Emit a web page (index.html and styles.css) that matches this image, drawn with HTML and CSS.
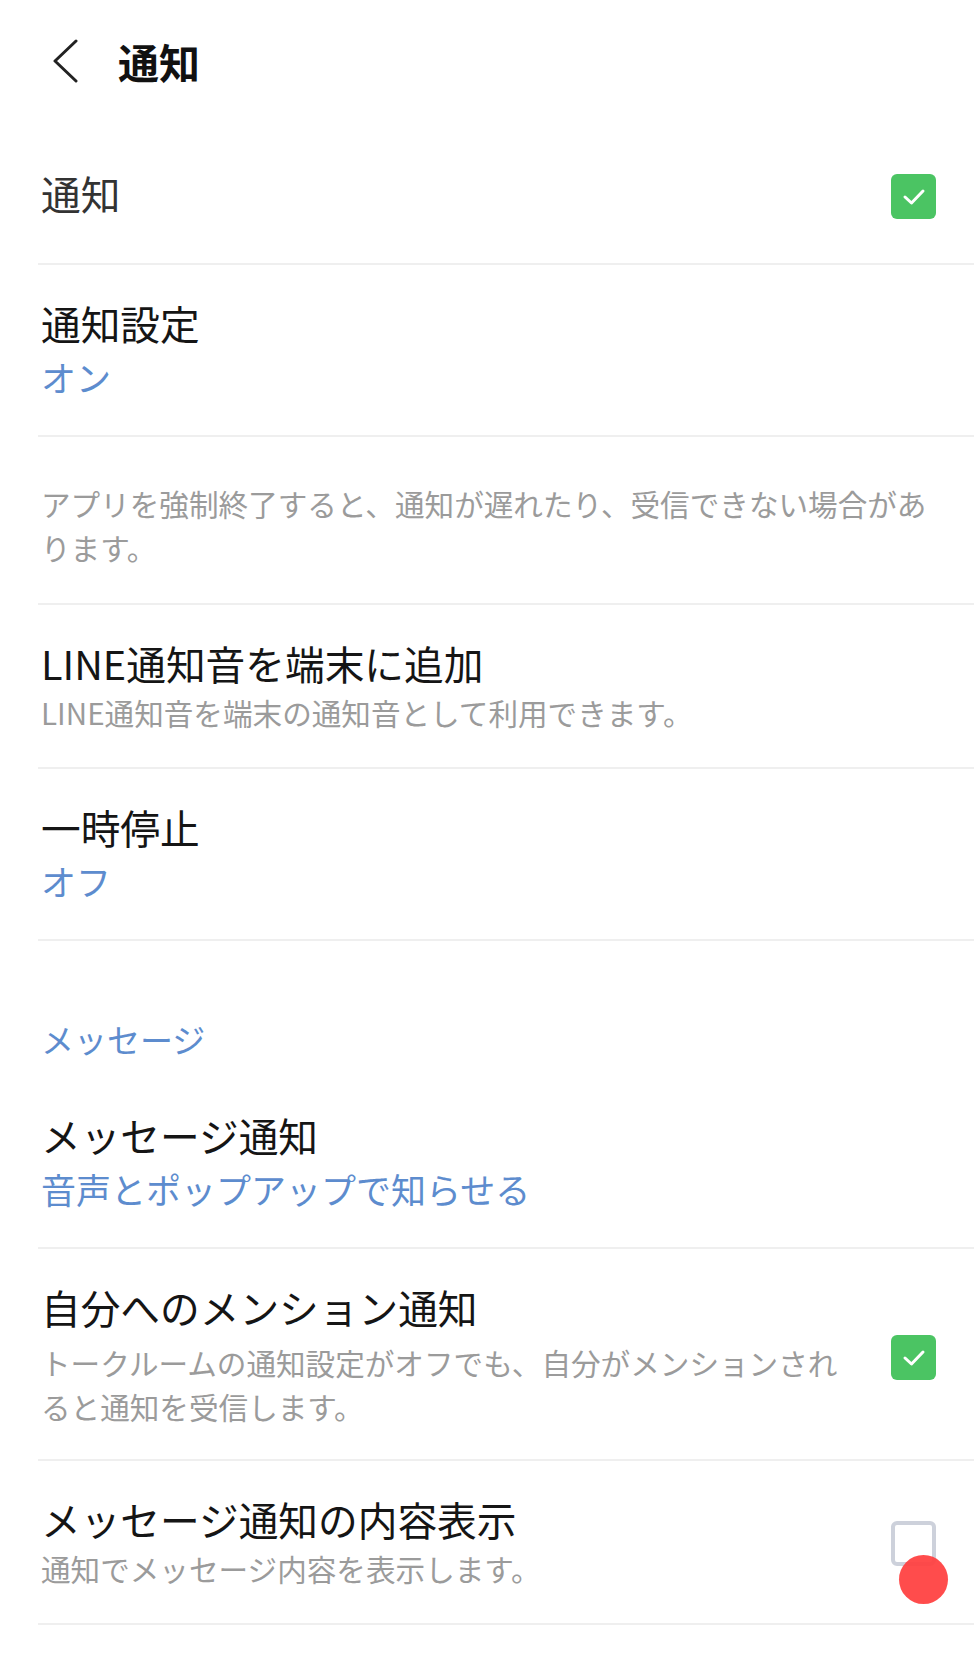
FILE: index.html
```html
<!DOCTYPE html>
<html lang="ja">
<head>
  <meta charset="UTF-8" />
  <title>通知</title>
  <meta name="viewport" content="width=device-width, initial-scale=1.0" />
  <link rel="stylesheet" href="styles.css">
</head>
<body>
  <header class="topbar">
    <svg class="back" viewBox="0 0 26 44" width="26" height="44">
      <path d="M24 2 L3 22 L24 42" fill="none" stroke="#222" stroke-width="3" stroke-linecap="round" stroke-linejoin="round" />
    </svg>
    <h1>通知</h1>
  </header>

  <main class="settings">
    <div class="row row-single">
      <div class="row-text">
        <div class="row-title row-title-soft">通知</div>
      </div>
      <span class="check check-on check-low">
        <svg viewBox="0 0 44 44" width="44" height="44"><path d="M13 23 L19.5 29 L31 17" fill="none" stroke="#fff" stroke-width="3" stroke-linecap="round" stroke-linejoin="round" /></svg>
      </span>
    </div>

    <div class="row">
      <div class="row-text">
        <div class="row-title">通知設定</div>
        <div class="row-value">オン</div>
      </div>
    </div>

    <p class="note">アプリを強制終了すると、通知が遅れたり、受信できない場合があ<br>ります。</p>

    <div class="row">
      <div class="row-text">
        <div class="row-title">LINE通知音を端末に追加</div>
        <div class="row-sub">LINE通知音を端末の通知音として利用できます。</div>
      </div>
    </div>

    <div class="row">
      <div class="row-text">
        <div class="row-title">一時停止</div>
        <div class="row-value">オフ</div>
      </div>
    </div>

    <h2 class="section">メッセージ</h2>

    <div class="row">
      <div class="row-text">
        <div class="row-title">メッセージ通知</div>
        <div class="row-value">音声とポップアップで知らせる</div>
      </div>
    </div>

    <div class="row">
      <div class="row-text">
        <div class="row-title">自分へのメンション通知</div>
        <div class="row-sub row-sub-wrap">トークルームの通知設定がオフでも、自分がメンションされ<br>ると通知を受信します。</div>
      </div>
      <span class="check check-on check-mid">
        <svg viewBox="0 0 44 44" width="44" height="44"><path d="M13 23 L19.5 29 L31 17" fill="none" stroke="#fff" stroke-width="3" stroke-linecap="round" stroke-linejoin="round" /></svg>
      </span>
    </div>

    <div class="row">
      <div class="row-text">
        <div class="row-title">メッセージ通知の内容表示</div>
        <div class="row-sub">通知でメッセージ内容を表示します。</div>
      </div>
      <span class="check check-off">
        <span class="touch-dot"></span>
      </span>
    </div>
  </main>
</body>
</html>
```

FILE: styles.css
```css
* {
  box-sizing: border-box;
  margin: 0;
  padding: 0;
}

body {
  background-color: #fff;
  color: #111;
  font-family: "Noto Sans CJK JP", "Noto Sans", sans-serif;
  width: 974px;
  min-height: 1679px;
}

/* top bar */
.topbar {
  height: 122px;
  display: flex;
  align-items: center;
  padding-left: 52px;
}

.back {
  display: block;
}

.topbar h1 {
  margin-left: 40px;
  font-size: 41px;
  font-weight: bold;
  line-height: 52px;
  color: #111;
}

/* list */
.settings {
  margin-left: 38px;
}

.row {
  display: flex;
  align-items: center;
  padding: 32px 38px 30px 0;
  border-bottom: 2px solid #efefef;
}

.row-single {
  padding-top: 44px;
  padding-bottom: 44px;
}

.row-text {
  flex: 1;
  margin-right: 20px;
  padding-left: 3px;
}

.row-title {
  font-size: 39.7px;
  line-height: 52px;
  color: #151515;
  white-space: nowrap;
}

.row-title-soft {
  color: #333;
}

.row-value {
  font-size: 35px;
  line-height: 56px;
  color: #5d8cce;
  white-space: nowrap;
}

.row-sub {
  font-size: 29.6px;
  line-height: 48px;
  color: #9b9b9b;
  white-space: nowrap;
}

.row-sub-wrap {
  line-height: 44px;
  margin-top: 8px;
}

.note {
  padding: 45px 0 33px 3px;
  font-size: 29.6px;
  line-height: 44px;
  color: #9b9b9b;
  white-space: nowrap;
  border-bottom: 2px solid #efefef;
}

.section {
  padding: 70px 0 10px 3px;
  font-size: 33px;
  font-weight: normal;
  line-height: 56px;
  color: #5d8cce;
}

/* checkboxes */
.check {
  position: relative;
  flex: none;
  width: 45px;
  height: 45px;
  border-radius: 6px;
}

.check svg {
  display: block;
  margin: 0 auto;
}

.check-low {
  margin-top: 8px;
}

.check-mid {
  margin-top: 4px;
}

.check-on {
  background-color: #4bc463;
}

.check-off {
  border: 4px solid #cdd1db;
  background-color: #fff;
}

.touch-dot {
  position: absolute;
  left: 4px;
  top: 30px;
  width: 49px;
  height: 49px;
  border-radius: 50%;
  background-color: rgba(255, 62, 62, 0.93);
}
```
